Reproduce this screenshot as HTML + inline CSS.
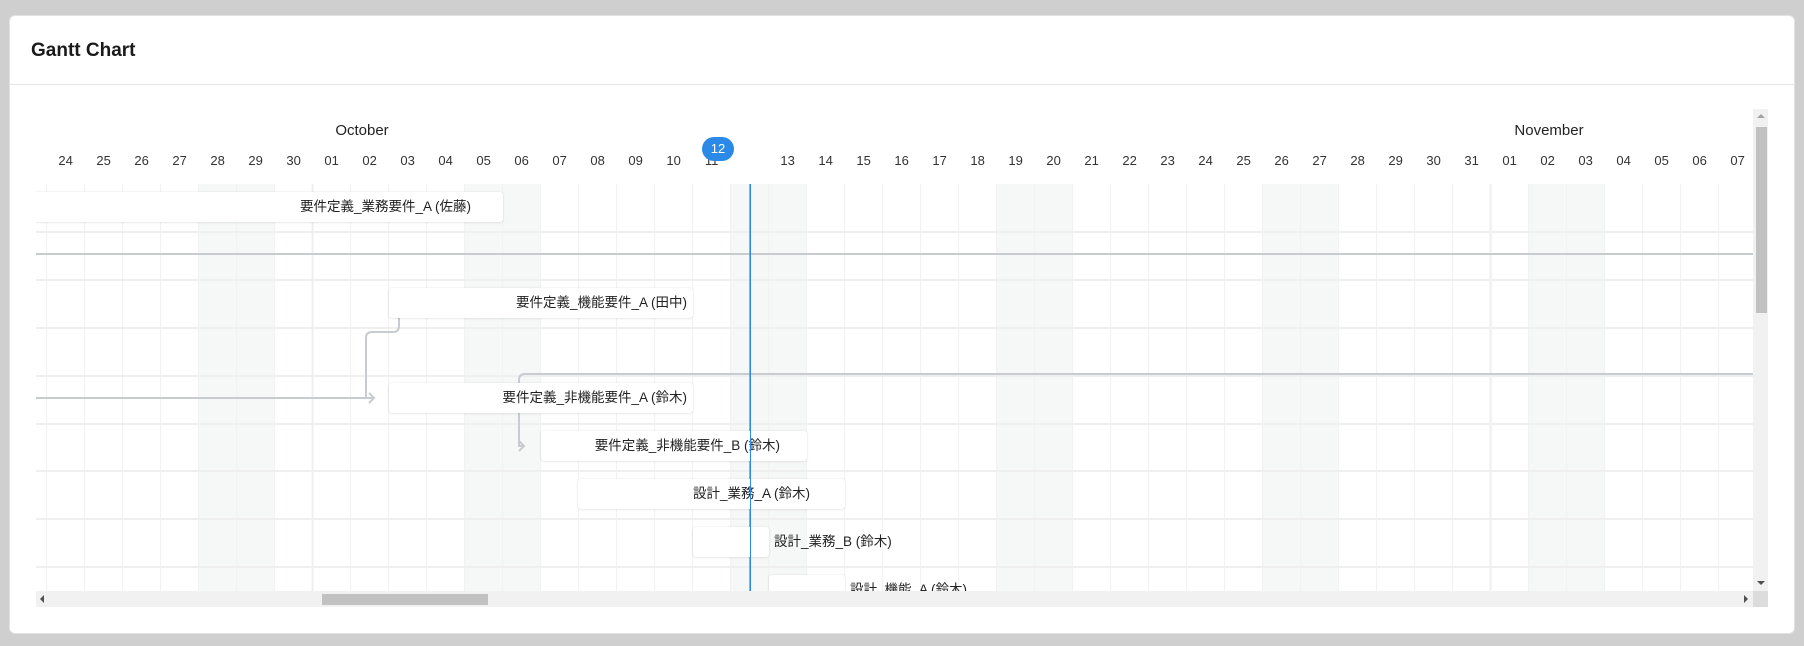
<!DOCTYPE html>
<html><head><meta charset="utf-8"><style>
*{margin:0;padding:0;box-sizing:border-box}
body{width:1804px;height:646px;background:#cfcfcf;font-family:"Liberation Sans","Noto Sans CJK JP",sans-serif;position:relative;overflow:hidden;color:#222}
.card{position:absolute;left:9px;top:15px;width:1786px;height:619px;background:#fff;border-radius:6px;border:1px solid #e2e2e2}
.hdr{position:absolute;left:9px;top:15px;width:1786px;height:70px;border-bottom:1px solid #e6e6e6}
.hdr span{position:absolute;left:22px;top:25px;font-size:19px;font-weight:600;color:#1a1a1a}
.lbl{position:absolute;font-size:13px;color:#333;transform:translateX(-50%);white-space:nowrap}
.bar{position:absolute;height:30px;background:#fff;border-radius:3px;box-shadow:0 0 2px rgba(0,0,0,.1),0 1px 2px rgba(0,0,0,.05)}
.bt{position:absolute;font-size:13.5px;color:#222;white-space:nowrap;line-height:30px}
</style></head><body>
<div class="card"></div>
<div class="hdr"><span>Gantt Chart</span></div>
<div style="position:absolute;left:36px;top:109px;width:1732px;height:498px;overflow:hidden">
<svg width="1732" height="498" style="position:absolute;left:-36px;top:-109px;overflow:visible" xmlns="http://www.w3.org/2000/svg">
<g fill="#f6f7f7">
<rect x="198.6" y="184" width="76" height="430"/><rect x="464.6" y="184" width="76" height="430"/><rect x="730.6" y="184" width="76" height="430"/><rect x="996.6" y="184" width="76" height="430"/><rect x="1262.6" y="184" width="76" height="430"/><rect x="1528.6" y="184" width="76" height="430"/>
</g>
<g stroke="#f1f1f1" stroke-width="1" id="vg"></g>
<g stroke="#efefef" stroke-width="2">
<line x1="36" y1="232" x2="1753" y2="232"/><line x1="36" y1="280" x2="1753" y2="280"/><line x1="36" y1="328" x2="1753" y2="328"/><line x1="36" y1="376" x2="1753" y2="376"/><line x1="36" y1="424" x2="1753" y2="424"/><line x1="36" y1="471" x2="1753" y2="471"/><line x1="36" y1="519" x2="1753" y2="519"/><line x1="36" y1="567" x2="1753" y2="567"/>
<line x1="312.6" y1="184" x2="312.6" y2="600"/><line x1="1490.6" y1="184" x2="1490.6" y2="600"/>
</g>
<g stroke="#c8ccd0" stroke-width="2" fill="none">
<line x1="36" y1="254" x2="1753" y2="254"/>
<path d="M1753 374 H525 q-6 0 -6 6 V446 H523"/>
<path d="M399 318 V326 q0 6 -6 6 H372 q-6 0 -6 6 V398"/>
<line x1="36" y1="398" x2="374" y2="398"/>
<path d="M369 393 l5 5 l-5 5"/>
<path d="M519 441 l5 5 l-5 5"/>
</g>
<line x1="750" y1="184" x2="750" y2="600" stroke="#2b8ae8" stroke-width="1.2"/>
</svg>
</div>
<script>
var g=document.getElementById('vg'),s='';for(var i=-1;i<46;i++){var x=46.6+38*i;s+='<line x1="'+x+'" y1="184" x2="'+x+'" y2="600"/>';}g.innerHTML=s;
</script>
<div class="lbl" style="left:362px;top:122px;font-size:15px;color:#222">October</div>
<div class="lbl" style="left:1549px;top:122px;font-size:15px;color:#222">November</div>
<div id="days"></div>
<script>
var d=[24,25,26,27,28,29,30];for(var i=1;i<=31;i++)d.push(i);for(i=1;i<=7;i++)d.push(i);
var h='';d.forEach(function(v,i){if(i==18)return;h+='<div class="lbl" style="left:'+(65.6+38*i)+'px;top:153px">'+(v<10?'0'+v:v)+'</div>';});
document.getElementById('days').innerHTML=h;
</script>
<div style="position:absolute;left:702px;top:137px;width:32px;height:24px;border-radius:12px;background:#2b8ae8;color:#fff;font-size:13px;text-align:center;line-height:24px">12</div>
<div style="position:absolute;left:36px;top:109px;width:1717px;height:482px;overflow:hidden">
<div style="position:absolute;left:-36px;top:-109px;width:1804px;height:646px">
<div class="bar" style="left:30px;top:192px;width:473px"></div><div class="bt" style="left:300px;top:192px;width:170px;text-align:right">要件定義_業務要件_A (佐藤)</div>
<div class="bar" style="left:389px;top:288px;width:304px"></div><div class="bt" style="left:480px;top:288px;width:207px;text-align:right">要件定義_機能要件_A (田中)</div>
<div class="bar" style="left:389px;top:383px;width:304px"></div><div class="bt" style="left:460px;top:383px;width:227px;text-align:right">要件定義_非機能要件_A (鈴木)</div>
<div class="bar" style="left:541px;top:431px;width:266px"></div><div class="bt" style="left:560px;top:431px;width:220px;text-align:right">要件定義_非機能要件_B (鈴木)</div>
<div class="bar" style="left:578px;top:479px;width:267px"></div><div class="bt" style="left:650px;top:479px;width:160px;text-align:right">設計_業務_A (鈴木)</div>
<div class="bar" style="left:693px;top:527px;width:76px"></div><div class="bt" style="left:774px;top:527px">設計_業務_B (鈴木)</div>
<div class="bar" style="left:769px;top:575px;width:76px"></div><div class="bt" style="left:850px;top:575px">設計_機能_A (鈴木)</div>
</div></div>
<div style="position:absolute;left:750px;top:184px;width:1px;height:407px;background:#2b8ae8"></div>
<div style="position:absolute;left:1753px;top:109px;width:15px;height:482px;background:#f1f1f1"></div>
<div style="position:absolute;left:1756px;top:127px;width:11px;height:186px;background:#c1c1c1"></div>
<div style="position:absolute;left:1757px;top:114px;width:0;height:0;border:4px solid transparent;border-bottom-color:#a3a3a3;border-top:0"></div>
<div style="position:absolute;left:1757px;top:581px;width:0;height:0;border:4px solid transparent;border-top-color:#505050;border-bottom:0"></div>
<div style="position:absolute;left:36px;top:591px;width:1717px;height:16px;background:#f1f1f1"></div>
<div style="position:absolute;left:1753px;top:591px;width:15px;height:16px;background:#dcdcdc"></div>
<div style="position:absolute;left:322px;top:594px;width:166px;height:11px;background:#c1c1c1"></div>
<div style="position:absolute;left:40px;top:595px;width:0;height:0;border:4px solid transparent;border-right-color:#505050;border-left:0"></div>
<div style="position:absolute;left:1744px;top:595px;width:0;height:0;border:4px solid transparent;border-left-color:#505050;border-right:0"></div>
</body></html>
